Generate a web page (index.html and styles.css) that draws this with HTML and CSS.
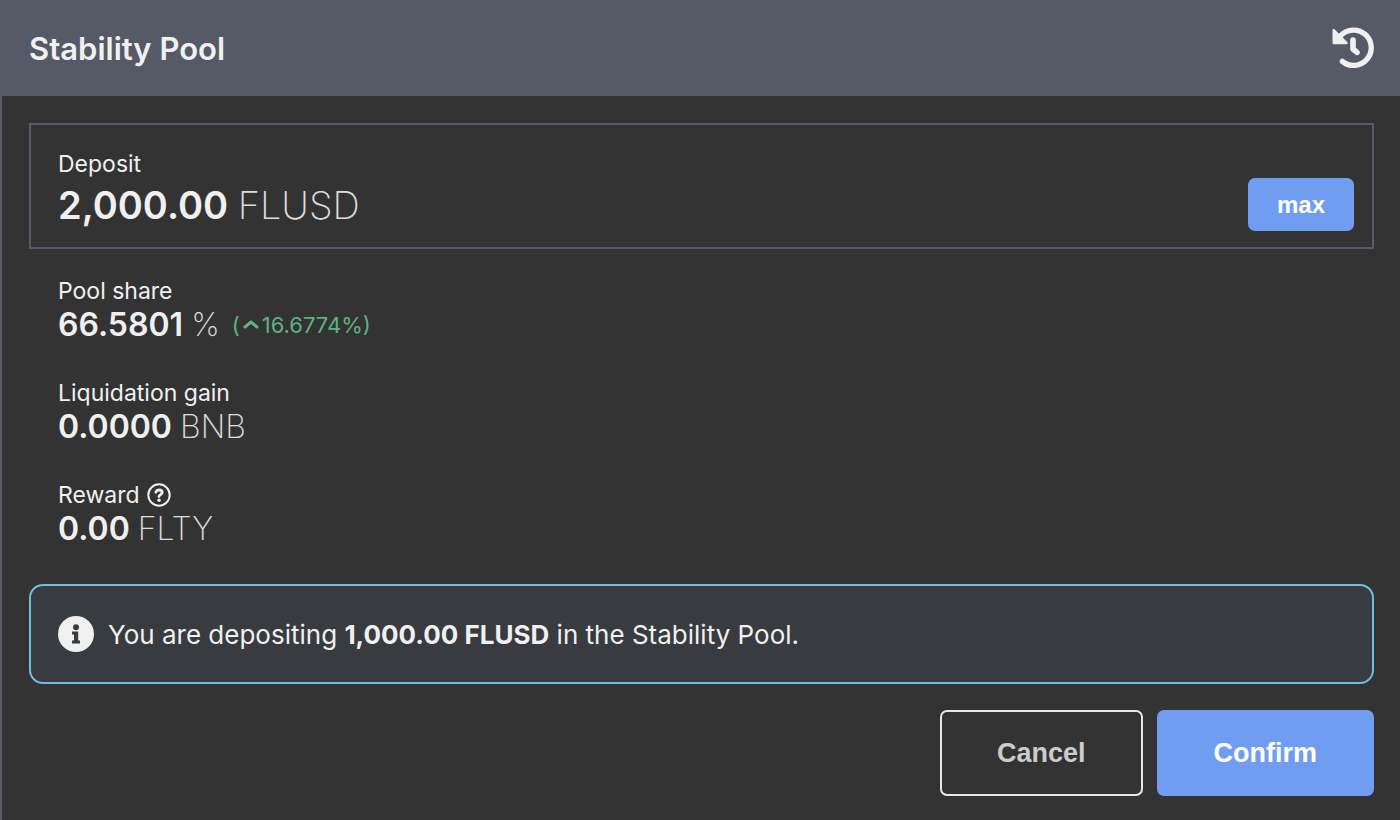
FILE: index.html
```
<!DOCTYPE html>
<html lang="en">
<head>
  <meta charset="UTF-8" />
  <meta name="viewport" content="width=device-width, initial-scale=1.0"/>
  <title>Stability Pool</title>
  <link rel="stylesheet" href="styles.css">
</head>
<body>

  <main class="card">
    <header class="card-header">
      <h2>Stability Pool</h2>
      <button type="button" class="icon-btn" aria-label="Reset">
        <svg class="history-icon" viewBox="0 0 126 126" fill="none" stroke="currentColor" stroke-width="16" stroke-linecap="round" stroke-linejoin="round">
          <path d="M26 26A53 53 0 1 1 31 103"/>
          <path d="M63 39V66L75 76" stroke-width="17"/>
          <path d="M5 9V48H44Z" fill="currentColor" stroke-width="7"/>
        </svg>
      </button>
    </header>

    <div class="card-body">
      <!-- Deposit -->
      <section class="deposit">
        <div class="label">Deposit</div>
        <div class="deposit-row">
          <div class="deposit-amount">2,000.00 <span class="unit">FLUSD</span></div>
          <button type="button" class="btn btn-max">max</button>
        </div>
      </section>

      <!-- Stats -->
      <section class="stats">
        <div>
          <div class="label">Pool share</div>
          <div class="value">
            <div>66.5801 <span class="unit">%</span></div>
            <div class="change">(<svg class="caret-icon" viewBox="0 0 16 16" fill="none" stroke="currentColor" stroke-width="3" stroke-linecap="round" stroke-linejoin="round"><path d="M2 10L8 5L14 10"/></svg> 16.6774%)</div>
          </div>
        </div>
        <div>
          <div class="label">Liquidation gain</div>
          <div class="value"><div>0.0000 <span class="unit">BNB</span></div></div>
        </div>
        <div>
          <div class="label">Reward
            <button type="button" class="icon-btn" aria-label="About the reward">
              <svg class="help-icon" viewBox="0 0 24 24" fill="none" stroke="currentColor" stroke-width="2" stroke-linecap="round" stroke-linejoin="round">
                <circle cx="12" cy="12" r="10.7"/>
                <path d="M8.8 9.2C9.6 7.5 10.7 7 12.1 7C13.8 7 15.2 8 15.2 9.6C15.2 11.6 12 11.6 12 13.6" stroke-width="2.8"/>
                <circle cx="12" cy="17.2" r="1.7" fill="currentColor" stroke="none"/>
              </svg>
            </button>
          </div>
          <div class="value"><div>0.00 <span class="unit">FLTY</span></div></div>
        </div>
      </section>

      <!-- Info message -->
      <div class="info">
        <svg class="info-icon" viewBox="0 0 36 36">
          <circle cx="18" cy="18" r="18" fill="#f0f0f0"/>
          <circle cx="18" cy="11.3" r="3" fill="#383b3f"/>
          <path d="M14 15.6H20.2V24.6H22V27.6H14V24.6H16V18.6H14Z" fill="#383b3f"/>
        </svg>
        <p>You are depositing <strong>1,000.00 FLUSD</strong> in the Stability Pool.</p>
      </div>

      <div class="actions">
        <button type="button" class="btn btn-cancel">Cancel</button>
        <button type="button" class="btn btn-confirm">Confirm</button>
      </div>
    </div>
  </main>

</body>
</html>
```

FILE: styles.css
```
* { box-sizing: border-box; margin: 0; padding: 0; }
body {
  font-family: Inter, "Liberation Sans", sans-serif;
  background-color: #333333;
  color: #f0f0f0;
}
.card {
  min-height: 100vh;
  border-left: 2px solid #555a66;
}
.card-header {
  display: flex;
  align-items: center;
  justify-content: space-between;
  height: 96px;
  padding: 0 26px 0 27px;
  background-color: #555a66;
}
h2 {
  font-size: 31px;
  font-weight: 600;
}
.icon-btn {
  display: inline-flex;
  background: none;
  border: none;
  color: inherit;
  cursor: pointer;
}
.history-icon { width: 42px; height: 42px; }
.card-body { padding: 27px 26px 24px 27px; }

.label {
  display: flex;
  align-items: center;
  gap: 7px;
  font-size: 23px;
  line-height: 28px;
}
.unit {
  font-weight: 200;
  opacity: 0.9;
}
.deposit {
  padding: 25px 18px 16px 27px;
  border: 2px solid #555a66;
}
.deposit-row {
  display: flex;
  align-items: center;
  justify-content: space-between;
}
.deposit-amount {
  font-size: 38px;
  font-weight: 600;
}

.stats {
  display: flex;
  flex-direction: column;
  gap: 34px;
  padding: 28px 29px 35px;
}
.value {
  display: flex;
  align-items: center;
  gap: 12px;
  font-size: 32px;
  font-weight: 600;
  line-height: 40px;
}
.change {
  display: flex;
  align-items: center;
  gap: 3px;
  font-size: 22px;
  font-weight: 400;
  color: #5fb184;
}
.caret-icon { width: 16px; height: 16px; }
.help-icon { width: 24px; height: 24px; }

.info {
  display: flex;
  align-items: center;
  gap: 14px;
  min-height: 100px;
  padding: 24px 27px;
  font-size: 26px;
  background-color: #383b3f;
  border: 2px solid #6fbde0;
  border-radius: 14px;
}
.info-icon { width: 36px; height: 36px; }

.actions {
  display: flex;
  justify-content: flex-end;
  gap: 14px;
  margin-top: 26px;
}
.btn {
  font-family: "Liberation Sans", Arial, sans-serif;
  font-size: 27px;
  font-weight: bold;
  line-height: 32px;
  padding: 25px 55px;
  border: 2px solid #709df2;
  border-radius: 7px;
  background-color: #709df2;
  color: white;
  cursor: pointer;
}
.btn-max {
  font-size: 24px;
  line-height: 29px;
  padding: 10px 27px;
}
.btn-cancel {
  background-color: transparent;
  border-color: #e8e8e8;
  color: #cccccc;
}
```
